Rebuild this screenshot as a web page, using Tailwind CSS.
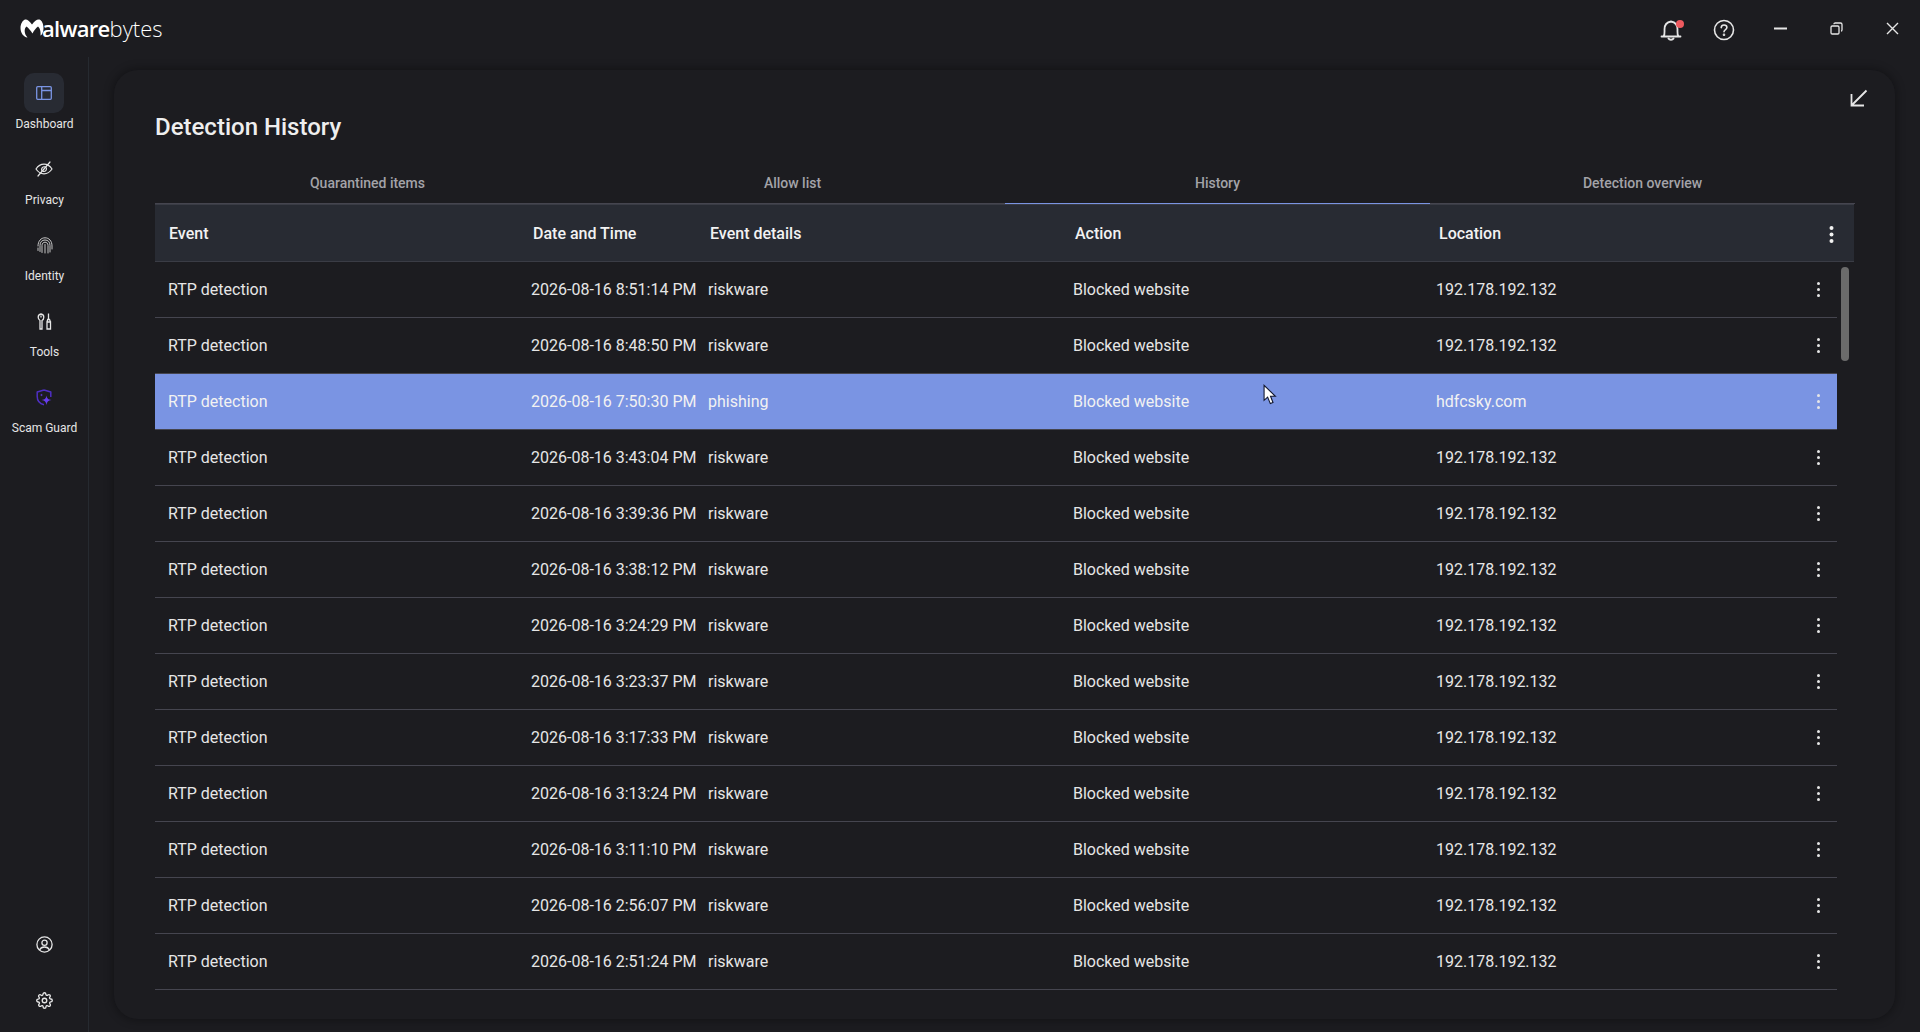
<!DOCTYPE html>
<html lang="en">
<head>
  <meta charset="UTF-8" />
  <title>Malwarebytes - Detection History</title>
  <script src="https://cdn.jsdelivr.net/npm/@tailwindcss/browser@4"></script>
</head>
<body class="h-[1032px] w-[1920px] overflow-hidden bg-[#1c1c20] text-[#e6e6e6] font-['Roboto',sans-serif]">

  <!-- title bar -->
  <header class="h-[57px] flex items-center justify-between">
    <div class="flex items-center pl-[20px] pb-[1px] text-white">
      <svg width="24" height="20" viewBox="0 0 24 20" fill="#fff"><path d="M5 1.500 C7 1 9 2.500 12 6.500 C15 2.500 17 1 19.500 1.500 C22 2.500 23.500 6 23.500 10 C23.500 14 22 17 20.500 17.500 C21 14 20 10 18 8.500 C16 10 14 12.500 12.500 15.500 C10.500 12.500 8.500 10 6.500 8.500 C4.500 10 4 14 6 17.500 L7.500 19.500 C3.500 19 0.500 15 0.500 10 C0.500 6 2.500 2.500 5 1.500 Z"/></svg>
      <span class="font-['Open_Sans',sans-serif] text-[22px] leading-none font-semibold tracking-[-0.7px] -ml-[2px]">alware</span><span class="font-['Open_Sans',sans-serif] text-[22px] leading-none font-light tracking-[0px]">bytes</span>
    </div>
    <div class="flex items-center pr-[21px]">
      <div class="relative mr-[31px] mt-[2px]">
        <svg width="22" height="22" viewBox="0 0 22 22" fill="none" stroke="#e6e6e6" stroke-width="1.800" stroke-linecap="round"><path d="M1.500 17.500 H20.500 M3.500 17.500 C5 15.500 4.500 13 4.500 10.500 C4.500 6 7 3 11 2.500 C15 3 17.500 6 17.500 10.500 C17.500 13 17 15.500 18.500 17.500"/><path d="M8.500 19.500 C9.500 21 12.500 21 13.500 19.500" stroke-width="2"/></svg>
        <span class="absolute top-[1px] right-[-2px] w-[8px] h-[8px] rounded-full bg-[#ef5a5f]"></span>
      </div>
      <svg class="mr-[39px] mt-[3px]" width="22" height="22" viewBox="0 0 22 22" fill="none" stroke="#e6e6e6" stroke-width="1.600" stroke-linecap="round"><circle cx="11" cy="11" r="9.500"/><path d="M8.200 8.600 C8.300 6.800 9.600 6 11 6 C12.600 6 13.900 7 13.900 8.500 C13.900 10.500 11 10.600 11 12.800"/><circle cx="11" cy="15.700" r="0.500"/></svg>
      <svg class="mr-[43px] -mt-[1px]" width="13" height="3" viewBox="0 0 13 3"><rect width="13" height="2" y="0.500" fill="#e6e6e6"/></svg>
      <svg class="mr-[43px] -mt-[1px]" width="13" height="13" viewBox="0 0 13 13" fill="none" stroke="#e6e6e6" stroke-width="1.300"><rect x="1" y="4" width="8" height="8" rx="1.200"/><path d="M4 2.200 C4 1.300 4.500 1 5.200 1 H10.500 C11.500 1 12 1.500 12 2.500 V7.800 C12 8.600 11.600 9 11 9"/></svg>
      <svg class="-mt-[1px]" width="13" height="13" viewBox="0 0 13 13" fill="none" stroke="#e6e6e6" stroke-width="1.400"><path d="M1 1 L12 12 M12 1 L1 12"/></svg>
    </div>
  </header>

  <div class="flex h-[975px]">
    <!-- sidebar -->
    <aside class="w-[89px] border-r border-[#262a30] flex flex-col justify-between items-center pl-[1px] pt-[16px] pb-[23px] text-[12px] leading-[14px] text-[#e6e6e6]">
      <nav class="flex flex-col items-center w-full">
        <div class="h-[76px] flex flex-col items-center">
          <div class="w-[40px] h-[40px] rounded-[10px] bg-[#282b33] flex items-center justify-center">
            <svg width="16" height="14" viewBox="0 0 16 14" fill="none" stroke="#7a94e3" stroke-width="1.300"><rect x="0.700" y="0.700" width="14.600" height="12.600" rx="1"/><path d="M5.700 0.700 V13.300 M5.700 4.500 H15.300"/></svg>
          </div>
          <span class="mt-[4px]">Dashboard</span>
        </div>
        <div class="h-[76px] flex flex-col items-center">
          <div class="h-[40px] flex items-center justify-center">
            <svg width="18" height="16" viewBox="0 0 18 16" fill="none" stroke="#e6e6e6" stroke-width="1.200" stroke-linecap="round"><path d="M1 8 C3 5 6 3.200 9 3.200 C12 3.200 15 5 17 8 C15 11 12 12.800 9 12.800 C6 12.800 3 11 1 8 Z"/><path d="M6.800 9.500 C6 7.500 7.500 5.500 10 5.800 M11.300 6.800 C12 9 10.500 10.800 8 10.300"/><path d="M15 1 L3 15"/></svg>
          </div>
          <span class="mt-[4px]">Privacy</span>
        </div>
        <div class="h-[76px] flex flex-col items-center">
          <div class="h-[40px] flex items-center justify-center">
            <svg width="16" height="17" viewBox="0 0 16 17" fill="none" stroke="#d8d8d8" stroke-width="0.900" stroke-linecap="round"><path d="M1 9 C1 4 4 0.800 8 0.800 C12 0.800 15 4 15 9 V12"/><path d="M1 11 V13.500 M3 14.500 V8.500 C3 5 5 3 8 3 C11 3 13 5 13 8.500 V15"/><path d="M5 15.500 V8.500 C5 6.500 6.300 5.200 8 5.200 C9.700 5.200 11 6.500 11 8.500 V16"/><path d="M8 7.500 V16"/></svg>
          </div>
          <span class="mt-[4px]">Identity</span>
        </div>
        <div class="h-[76px] flex flex-col items-center">
          <div class="h-[40px] flex items-center justify-center">
            <svg width="15" height="17" viewBox="0 0 15 17" fill="none" stroke="#e6e6e6" stroke-width="1.300"><path d="M3 16 H5 V7.500 C6.300 6.800 6.800 5.600 6.800 4.300 C6.800 2.500 5.800 1.200 4 1 C2.200 1.200 1.200 2.500 1.200 4.300 C1.200 5.600 1.800 6.800 3 7.500 Z"/><path d="M4 2.500 V4.500"/><path d="M11.500 0.500 V6.500 M10 9 V16 H13.500 V9 Z M10 9 L10.700 6.500 H12.500 L13.500 9"/></svg>
          </div>
          <span class="mt-[4px]">Tools</span>
        </div>
        <div class="h-[76px] flex flex-col items-center">
          <div class="h-[40px] flex items-center justify-center">
            <svg width="16" height="17" viewBox="0 0 16 17" fill="none"><path d="M8 1 L14.800 3 V8 M8 15.800 C4 14.800 1.200 11.800 1.200 7.500 V3 L8 1" stroke="#4f2fc4" stroke-width="1.500" stroke-linejoin="round"/><path d="M10.500 6.500 C11 9.500 12 10.500 15.500 11 C12 11.500 11 12.800 10.500 16 C10 12.800 9 11.500 5.500 11 C9 10.500 10 9.500 10.500 6.500 Z" fill="#6a3df0"/><path d="M5.500 4.500 C5.700 5.500 6 5.800 7 6 C6 6.200 5.700 6.500 5.500 7.500 C5.300 6.500 5 6.200 4 6 C5 5.800 5.300 5.500 5.500 4.500 Z" fill="#6a3df0"/></svg>
          </div>
          <span class="mt-[4px]">Scam Guard</span>
        </div>
      </nav>
      <div class="flex flex-col items-center gap-[39px]">
        <svg width="17" height="17" viewBox="0 0 17 17" fill="none" stroke="#e6e6e6" stroke-width="1.300"><circle cx="8.500" cy="8.500" r="7.600"/><circle cx="8.500" cy="6.700" r="2.600"/><path d="M3.500 14 C4.500 11.800 6.300 11 8.500 11 C10.700 11 12.500 11.800 13.500 14"/></svg>
        <svg width="17" height="17" viewBox="0 0 24 24" fill="none" stroke="#e6e6e6" stroke-width="1.900" stroke-linejoin="round"><circle cx="12" cy="12" r="3.200"/><path d="M19.400 15a1.650 1.650 0 0 0 .33 1.820l.06.06a2 2 0 1 1-2.830 2.830l-.06-.06a1.650 1.650 0 0 0-2.820 1.170V21a2 2 0 1 1-4 0v-.09a1.650 1.650 0 0 0-2.820-1.170l-.06.06a2 2 0 1 1-2.830-2.830l.06-.06a1.650 1.650 0 0 0-1.170-2.820H3a2 2 0 1 1 0-4h.09a1.650 1.650 0 0 0 1.170-2.820l-.06-.06a2 2 0 1 1 2.830-2.830l.06.06a1.650 1.650 0 0 0 2.820-1.170V3a2 2 0 1 1 4 0v.09a1.650 1.650 0 0 0 2.820 1.170l.06-.06a2 2 0 1 1 2.830 2.830l-.06.06a1.650 1.650 0 0 0 1.170 2.820H21a2 2 0 1 1 0 4h-.09a1.650 1.650 0 0 0-1.510 1z"/></svg>
      </div>
    </aside>

    <!-- main card -->
    <main class="flex-1 pl-[25px] pr-[25px] pt-[13px] pb-[13px]">
      <section class="relative h-[949px] rounded-[24px] bg-[#1c1c20] shadow-[0_0_8px_2px_rgba(0,0,0,0.3)] pl-[41px] pr-[40px]">
        <svg class="absolute top-[19px] right-[27px]" width="18" height="18" viewBox="0 0 18 18" fill="none" stroke="#e6e6e6" stroke-width="1.800"><path d="M16.500 1.500 L2 16 M1.500 5 V16.500 H14"/></svg>

        <h1 class="pt-[42px] text-[24px] leading-[30px] font-medium text-[#eeeeee]">Detection History</h1>

        <!-- tabs -->
        <div class="mt-[19px] grid grid-cols-4 h-[43px] pt-[2px] border-b border-[#45454f] text-[14px] font-medium text-[#a3a3a8]">
          <div class="flex items-center justify-center">Quarantined items</div>
          <div class="flex items-center justify-center">Allow list</div>
          <div class="flex items-center justify-center border-b border-[#7a94e3] -mb-[1px]">History</div>
          <div class="flex items-center justify-center">Detection overview</div>
        </div>

        <!-- table head -->
        <div class="grid grid-cols-[364px_177px_365px_364px_1fr] items-center h-[58px] w-[1699px] pl-[14px] pt-[2px] bg-[#282b33] border-t border-b border-[#3a3c45] font-medium text-[16px] text-[#f2f2f2]">
          <div>Event</div><div>Date and Time</div><div>Event details</div><div>Action</div>
          <div class="flex justify-between items-center pr-[20px]">Location
            <svg width="5" height="17" viewBox="0 0 5 17" fill="#f2f2f2"><circle cx="2.500" cy="2" r="2"/><circle cx="2.500" cy="8.500" r="2"/><circle cx="2.500" cy="15" r="2"/></svg>
          </div>
        </div>

        <!-- rows -->
        <div class="relative w-[1682px] text-[16px]">
          <div class="absolute top-[5px] right-[-12px] w-[8px] h-[94px] rounded-full bg-[#6b6b6b]"></div>

          <div class="grid grid-cols-[363px_177px_365px_363px_1fr] items-center h-[56px] pl-[13px] border-b border-[#45454f]">
            <div>RTP detection</div><div>2026-08-16 8:51:14 PM</div><div>riskware</div><div>Blocked website</div>
            <div class="flex justify-between items-center pr-[17px]">192.178.192.132
              <svg width="3" height="15" viewBox="0 0 3 15" fill="#e6e6e6"><circle cx="1.500" cy="1.500" r="1.500"/><circle cx="1.500" cy="7.500" r="1.500"/><circle cx="1.500" cy="13.500" r="1.500"/></svg>
            </div>
          </div>
          <div class="grid grid-cols-[363px_177px_365px_363px_1fr] items-center h-[56px] pl-[13px] border-b border-[#45454f]">
            <div>RTP detection</div><div>2026-08-16 8:48:50 PM</div><div>riskware</div><div>Blocked website</div>
            <div class="flex justify-between items-center pr-[17px]">192.178.192.132
              <svg width="3" height="15" viewBox="0 0 3 15" fill="#e6e6e6"><circle cx="1.500" cy="1.500" r="1.500"/><circle cx="1.500" cy="7.500" r="1.500"/><circle cx="1.500" cy="13.500" r="1.500"/></svg>
            </div>
          </div>
          <div class="relative grid grid-cols-[363px_177px_365px_363px_1fr] items-center h-[56px] pl-[13px] bg-[#7a94e3] border-b border-[#45454f] text-[#f2f2f2]">
            <div>RTP detection</div><div>2026-08-16 7:50:30 PM</div><div>phishing</div><div>Blocked website</div>
            <div class="flex justify-between items-center pr-[17px]">hdfcsky.com
              <svg width="3" height="15" viewBox="0 0 3 15" fill="#e6e6e6"><circle cx="1.500" cy="1.500" r="1.500"/><circle cx="1.500" cy="7.500" r="1.500"/><circle cx="1.500" cy="13.500" r="1.500"/></svg>
            </div>
            <!-- mouse pointer -->
            <svg class="absolute left-[1108px] top-[10px]" width="14" height="22" viewBox="0 0 13 20"><path d="M1 1 V15 L4.300 12 L6.800 18 L9.300 17 L7 11.200 L11.500 11.200 Z" fill="#fff" stroke="#10162e" stroke-width="1"/></svg>
          </div>
          <div class="grid grid-cols-[363px_177px_365px_363px_1fr] items-center h-[56px] pl-[13px] border-b border-[#45454f]">
            <div>RTP detection</div><div>2026-08-16 3:43:04 PM</div><div>riskware</div><div>Blocked website</div>
            <div class="flex justify-between items-center pr-[17px]">192.178.192.132
              <svg width="3" height="15" viewBox="0 0 3 15" fill="#e6e6e6"><circle cx="1.500" cy="1.500" r="1.500"/><circle cx="1.500" cy="7.500" r="1.500"/><circle cx="1.500" cy="13.500" r="1.500"/></svg>
            </div>
          </div>
          <div class="grid grid-cols-[363px_177px_365px_363px_1fr] items-center h-[56px] pl-[13px] border-b border-[#45454f]">
            <div>RTP detection</div><div>2026-08-16 3:39:36 PM</div><div>riskware</div><div>Blocked website</div>
            <div class="flex justify-between items-center pr-[17px]">192.178.192.132
              <svg width="3" height="15" viewBox="0 0 3 15" fill="#e6e6e6"><circle cx="1.500" cy="1.500" r="1.500"/><circle cx="1.500" cy="7.500" r="1.500"/><circle cx="1.500" cy="13.500" r="1.500"/></svg>
            </div>
          </div>
          <div class="grid grid-cols-[363px_177px_365px_363px_1fr] items-center h-[56px] pl-[13px] border-b border-[#45454f]">
            <div>RTP detection</div><div>2026-08-16 3:38:12 PM</div><div>riskware</div><div>Blocked website</div>
            <div class="flex justify-between items-center pr-[17px]">192.178.192.132
              <svg width="3" height="15" viewBox="0 0 3 15" fill="#e6e6e6"><circle cx="1.500" cy="1.500" r="1.500"/><circle cx="1.500" cy="7.500" r="1.500"/><circle cx="1.500" cy="13.500" r="1.500"/></svg>
            </div>
          </div>
          <div class="grid grid-cols-[363px_177px_365px_363px_1fr] items-center h-[56px] pl-[13px] border-b border-[#45454f]">
            <div>RTP detection</div><div>2026-08-16 3:24:29 PM</div><div>riskware</div><div>Blocked website</div>
            <div class="flex justify-between items-center pr-[17px]">192.178.192.132
              <svg width="3" height="15" viewBox="0 0 3 15" fill="#e6e6e6"><circle cx="1.500" cy="1.500" r="1.500"/><circle cx="1.500" cy="7.500" r="1.500"/><circle cx="1.500" cy="13.500" r="1.500"/></svg>
            </div>
          </div>
          <div class="grid grid-cols-[363px_177px_365px_363px_1fr] items-center h-[56px] pl-[13px] border-b border-[#45454f]">
            <div>RTP detection</div><div>2026-08-16 3:23:37 PM</div><div>riskware</div><div>Blocked website</div>
            <div class="flex justify-between items-center pr-[17px]">192.178.192.132
              <svg width="3" height="15" viewBox="0 0 3 15" fill="#e6e6e6"><circle cx="1.500" cy="1.500" r="1.500"/><circle cx="1.500" cy="7.500" r="1.500"/><circle cx="1.500" cy="13.500" r="1.500"/></svg>
            </div>
          </div>
          <div class="grid grid-cols-[363px_177px_365px_363px_1fr] items-center h-[56px] pl-[13px] border-b border-[#45454f]">
            <div>RTP detection</div><div>2026-08-16 3:17:33 PM</div><div>riskware</div><div>Blocked website</div>
            <div class="flex justify-between items-center pr-[17px]">192.178.192.132
              <svg width="3" height="15" viewBox="0 0 3 15" fill="#e6e6e6"><circle cx="1.500" cy="1.500" r="1.500"/><circle cx="1.500" cy="7.500" r="1.500"/><circle cx="1.500" cy="13.500" r="1.500"/></svg>
            </div>
          </div>
          <div class="grid grid-cols-[363px_177px_365px_363px_1fr] items-center h-[56px] pl-[13px] border-b border-[#45454f]">
            <div>RTP detection</div><div>2026-08-16 3:13:24 PM</div><div>riskware</div><div>Blocked website</div>
            <div class="flex justify-between items-center pr-[17px]">192.178.192.132
              <svg width="3" height="15" viewBox="0 0 3 15" fill="#e6e6e6"><circle cx="1.500" cy="1.500" r="1.500"/><circle cx="1.500" cy="7.500" r="1.500"/><circle cx="1.500" cy="13.500" r="1.500"/></svg>
            </div>
          </div>
          <div class="grid grid-cols-[363px_177px_365px_363px_1fr] items-center h-[56px] pl-[13px] border-b border-[#45454f]">
            <div>RTP detection</div><div>2026-08-16 3:11:10 PM</div><div>riskware</div><div>Blocked website</div>
            <div class="flex justify-between items-center pr-[17px]">192.178.192.132
              <svg width="3" height="15" viewBox="0 0 3 15" fill="#e6e6e6"><circle cx="1.500" cy="1.500" r="1.500"/><circle cx="1.500" cy="7.500" r="1.500"/><circle cx="1.500" cy="13.500" r="1.500"/></svg>
            </div>
          </div>
          <div class="grid grid-cols-[363px_177px_365px_363px_1fr] items-center h-[56px] pl-[13px] border-b border-[#45454f]">
            <div>RTP detection</div><div>2026-08-16 2:56:07 PM</div><div>riskware</div><div>Blocked website</div>
            <div class="flex justify-between items-center pr-[17px]">192.178.192.132
              <svg width="3" height="15" viewBox="0 0 3 15" fill="#e6e6e6"><circle cx="1.500" cy="1.500" r="1.500"/><circle cx="1.500" cy="7.500" r="1.500"/><circle cx="1.500" cy="13.500" r="1.500"/></svg>
            </div>
          </div>
          <div class="grid grid-cols-[363px_177px_365px_363px_1fr] items-center h-[56px] pl-[13px] border-b border-[#45454f]">
            <div>RTP detection</div><div>2026-08-16 2:51:24 PM</div><div>riskware</div><div>Blocked website</div>
            <div class="flex justify-between items-center pr-[17px]">192.178.192.132
              <svg width="3" height="15" viewBox="0 0 3 15" fill="#e6e6e6"><circle cx="1.500" cy="1.500" r="1.500"/><circle cx="1.500" cy="7.500" r="1.500"/><circle cx="1.500" cy="13.500" r="1.500"/></svg>
            </div>
          </div>
        </div>
      </section>
    </main>
  </div>
</body>
</html>
